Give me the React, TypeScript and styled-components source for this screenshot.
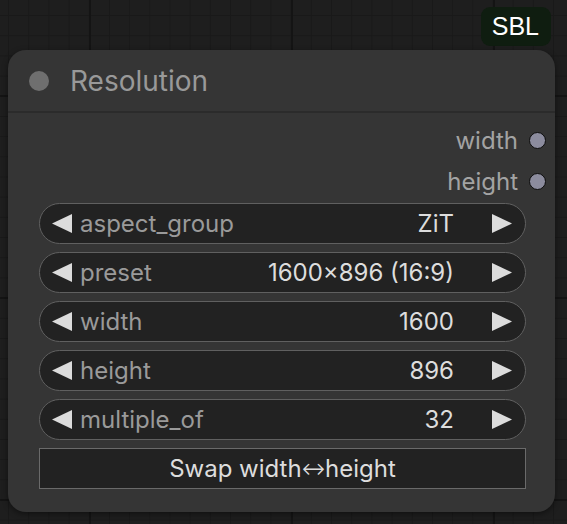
import React from 'react'
import styled, { createGlobalStyle } from 'styled-components'

const GlobalStyle = createGlobalStyle`
  html, body {
    margin: 0;
    padding: 0;
    height: 100%;
  }
  body {
    background-color: #1e1e1e;
    background-image:
      linear-gradient(to right, #141414 0 2px, transparent 2px),
      linear-gradient(to bottom, #141414 0 2px, transparent 2px),
      linear-gradient(to right, #191919 0 1px, transparent 1px),
      linear-gradient(to bottom, #191919 0 1px, transparent 1px);
    background-size: 202px 202px, 202px 202px, 20.2px 20.2px, 20.2px 20.2px;
    background-position: 89px 0, 0 95px, 8px 0, 0 15px;
    font-family: Inter, 'Noto Sans', sans-serif;
    overflow: hidden;
  }
`

const widgets = [
  { name: 'aspect_group', value: 'ZiT' },
  { name: 'preset', value: '1600×896 (16:9)' },
  { name: 'width', value: '1600' },
  { name: 'height', value: '896' },
  { name: 'multiple_of', value: '32' },
]

const outputs = ['width', 'height']

const Arrow = ({ dir }: { dir: 'left' | 'right' }) => (
  <ArrowSvg width="20" height="19" viewBox="0 0 20 19">
    {dir === 'left' ? (
      <polygon points="20,0 0,9.5 20,19" fill="#dcdcdc" />
    ) : (
      <polygon points="0,0 20,9.5 0,19" fill="#dcdcdc" />
    )}
  </ArrowSvg>
)

const App = () => {
  return (
    <Canvas>
      <GlobalStyle />
      <BadgeRow>
        <Badge>SBL</Badge>
      </BadgeRow>
      <Node>
        <TitleBar>
          <TitleDot />
          <Title>Resolution</Title>
        </TitleBar>
        <Body>
          <Outputs>
            {outputs.map((o) => (
              <OutputRow key={o}>
                <OutputLabel>{o}</OutputLabel>
                <Slot />
              </OutputRow>
            ))}
          </Outputs>
          <Widgets>
            {widgets.map((w) => (
              <Combo key={w.name}>
                <Arrow dir="left" />
                <ComboLabel>{w.name}</ComboLabel>
                <ComboValue>{w.value}</ComboValue>
                <Arrow dir="right" />
              </Combo>
            ))}
            <SwapButton>
              Swap width<SwapGlyph>↔</SwapGlyph>height
            </SwapButton>
          </Widgets>
        </Body>
      </Node>
    </Canvas>
  )
}

export default App

const Canvas = styled.div`
  display: flex;
  flex-direction: column;
  padding: 7px 0 0 8px;
  width: 547px;
`

const BadgeRow = styled.div`
  display: flex;
  justify-content: flex-end;
  padding-right: 4px;
  margin-bottom: 4px;
`

const Badge = styled.div`
  height: 39px;
  padding: 0 12px 0 11px;
  display: flex;
  align-items: center;
  border-radius: 9px;
  background: #0f1d10;
  color: #ffffff;
  font-family: 'Liberation Sans', Arial, sans-serif;
  font-size: 25px;
`

const Node = styled.div`
  width: 547px;
  height: 462px;
  box-sizing: border-box;
  background: #353535;
  border-radius: 18px;
  box-shadow: 0 2px 6px rgba(0, 0, 0, 0.45);
  display: flex;
  flex-direction: column;
`

const TitleBar = styled.div`
  height: 61px;
  display: flex;
  align-items: center;
  padding-left: 21px;
  gap: 21px;
  border-bottom: 2px solid #2b2b2b;
`

const TitleDot = styled.div`
  width: 20px;
  height: 20px;
  border-radius: 50%;
  background: #6f6f6f;
`

const Title = styled.div`
  color: #999999;
  font-size: 28px;
  line-height: 1;
  padding-top: 1px;
`

const Body = styled.div`
  display: flex;
  flex-direction: column;
  padding: 7px 29px 0 31px;
`

const Outputs = styled.div`
  display: flex;
  flex-direction: column;
`

const OutputRow = styled.div`
  height: 41px;
  display: flex;
  align-items: center;
  justify-content: flex-end;
  gap: 11px;
  margin-right: -20px;
`

const OutputLabel = styled.span`
  color: #a3a3a3;
  font-size: 24px;
`

const Slot = styled.div`
  width: 15px;
  height: 15px;
  border-radius: 50%;
  background: #8c8c9e;
  border: 1.5px solid #0c0c0c;
`

const Widgets = styled.div`
  display: flex;
  flex-direction: column;
  gap: 8px;
  margin-top: 1px;
`

const Combo = styled.div`
  height: 41px;
  box-sizing: border-box;
  border: 1.5px solid #606060;
  border-radius: 21px;
  background: #222222;
  display: flex;
  align-items: center;
  padding: 0 13px 0 12px;
`

const ArrowSvg = styled.svg`
  flex: none;
  display: block;
`

const ComboLabel = styled.span`
  color: #9a9a9a;
  font-size: 24px;
  margin-left: 8px;
  flex: 1;
`

const ComboValue = styled.span`
  color: #dddddd;
  font-size: 24px;
  margin-right: 38px;
`

const SwapButton = styled.div`
  height: 41px;
  box-sizing: border-box;
  border: 1.5px solid #6a6a6a;
  background: #222222;
  color: #dddddd;
  font-size: 24px;
  display: flex;
  align-items: center;
  justify-content: center;
`

const SwapGlyph = styled.span`
  font-family: 'DejaVu Sans', sans-serif;
  font-size: 28px;
  line-height: 1;
  font-weight: 300;
`
